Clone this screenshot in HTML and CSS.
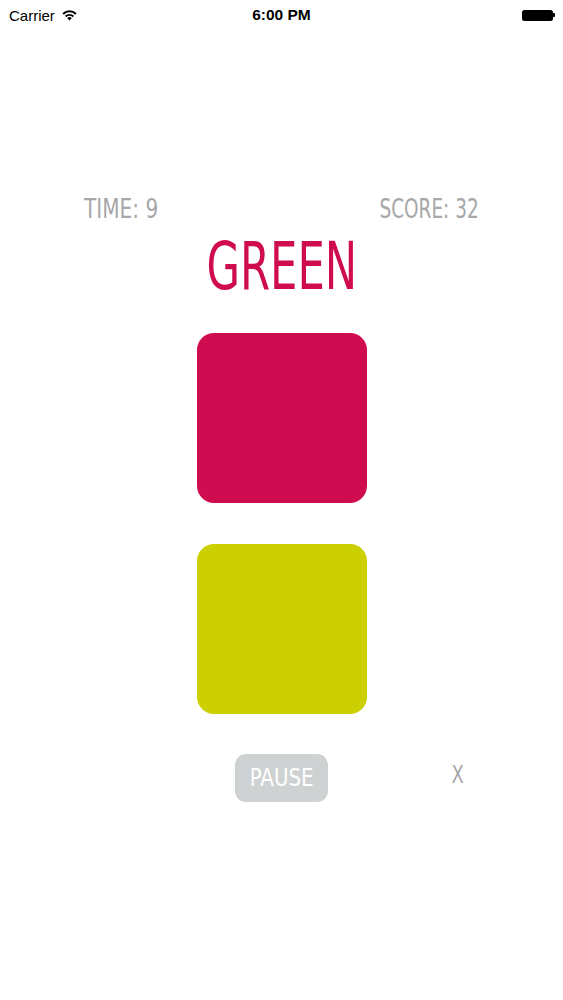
FILE: index.html
```html
<!DOCTYPE html>
<html>
<head>
<meta charset="utf-8">
<link rel="stylesheet" href="styles.css">
</head>
<body>
<div class="screen">
  <div class="status">
    <div class="status-left">
      <span class="carrier">Carrier</span>
      <svg class="wifi" width="17" height="12" viewBox="0 0 17 12">
        <path d="M8.5 11.5 L6.2 9.1 A3.3 3.3 0 0 1 10.8 9.1 Z" fill="#000"/>
        <path d="M3.9 6.8 A6.5 6.5 0 0 1 13.1 6.8 L11.7 8.2 A4.5 4.5 0 0 0 5.3 8.2 Z" fill="#000"/>
        <path d="M1.4 4.3 A10 10 0 0 1 15.6 4.3 L14.2 5.7 A8 8 0 0 0 2.8 5.7 Z" fill="#000"/>
      </svg>
    </div>
    <div class="status-time">6:00 PM</div>
    <div class="status-right">
      <div class="battery"></div>
      <div class="battery-tip"></div>
    </div>
  </div>
  <div class="game">
    <div class="stats">
      <span class="stat stat-left">TIME: 9</span>
      <span class="stat stat-right">SCORE: 32</span>
    </div>
    <div class="word"><span class="word-text">GREEN</span></div>
    <div class="tile tile-pink"></div>
    <div class="tile tile-yellow"></div>
    <div class="controls">
      <button class="pause"><span class="pause-text">PAUSE</span></button>
      <span class="close">X</span>
    </div>
  </div>
</div>
</body>
</html>
```
FILE: styles.css
```css
html, body {
  margin: 0;
  padding: 0;
  background: #fff;
}
.screen {
  width: 563px;
  height: 1000px;
  position: relative;
  font-family: "DejaVu Sans Condensed", "DejaVu Sans", sans-serif;
}
.status {
  height: 30px;
  display: flex;
  align-items: center;
  justify-content: space-between;
  padding: 0 8px 0 9px;
  font-family: "Liberation Sans", Arial, sans-serif;
  font-size: 15px;
  color: #000;
  position: relative;
}
.status-left {
  display: flex;
  align-items: center;
  gap: 6px;
  width: 120px;
}
.status-time {
  position: absolute;
  left: 0;
  right: 0;
  text-align: center;
  font-weight: bold;
  font-size: 15.5px;
}
.status-right {
  display: flex;
  align-items: center;
  width: 120px;
  justify-content: flex-end;
}
.battery {
  width: 31px;
  height: 11px;
  border-radius: 2.5px;
  background: #000;
}
.battery-tip {
  width: 2px;
  height: 4px;
  background: #000;
  border-radius: 0 1px 1px 0;
}
.game {
  display: flex;
  flex-direction: column;
  align-items: center;
}
.stats {
  margin-top: 163px;
  width: 395px;
  display: flex;
  justify-content: space-between;
}
.stat {
  font-family: "DejaVu Sans Condensed", "DejaVu Sans", sans-serif;
  font-size: 26px;
  color: #a7a7a9;
  line-height: 32px;
  display: inline-block;
}
.stat-left {
  transform-origin: left center;
  transform: scaleX(0.86);
}
.stat-right {
  transform-origin: right center;
  transform: scaleX(0.79);
}
.word {
  margin-top: 6px;
  height: 72px;
  display: flex;
  justify-content: center;
}
.word-text {
  display: inline-block;
  font-family: "DejaVu Sans Condensed", "DejaVu Sans", sans-serif;
  font-size: 65px;
  line-height: 72px;
  color: #cf0c50;
  transform: scaleX(0.74);
}
.tile {
  width: 170px;
  height: 170px;
  border-radius: 17px;
}
.tile-pink {
  margin-top: 30px;
  background: #d00c50;
}
.tile-yellow {
  margin-top: 41px;
  background: #ccd001;
}
.controls {
  margin-top: 40px;
  width: 563px;
  box-sizing: border-box;
  padding-left: 235px;
  display: flex;
  align-items: center;
  gap: 122px;
}
.pause {
  width: 93px;
  height: 48px;
  border: none;
  border-radius: 11px;
  background: #cfd2d3;
  color: #fff;
  padding: 0;
  display: flex;
  align-items: center;
  justify-content: center;
}
.pause-text {
  display: inline-block;
  font-family: "DejaVu Sans Condensed", "DejaVu Sans", sans-serif;
  font-size: 24px;
  transform: scaleX(0.92);
}
.close {
  display: inline-block;
  font-family: "DejaVu Sans Condensed", "DejaVu Sans", sans-serif;
  font-size: 25px;
  color: #a7a7a9;
  transform: scaleX(0.8);
  margin-bottom: 7px;
}
```
